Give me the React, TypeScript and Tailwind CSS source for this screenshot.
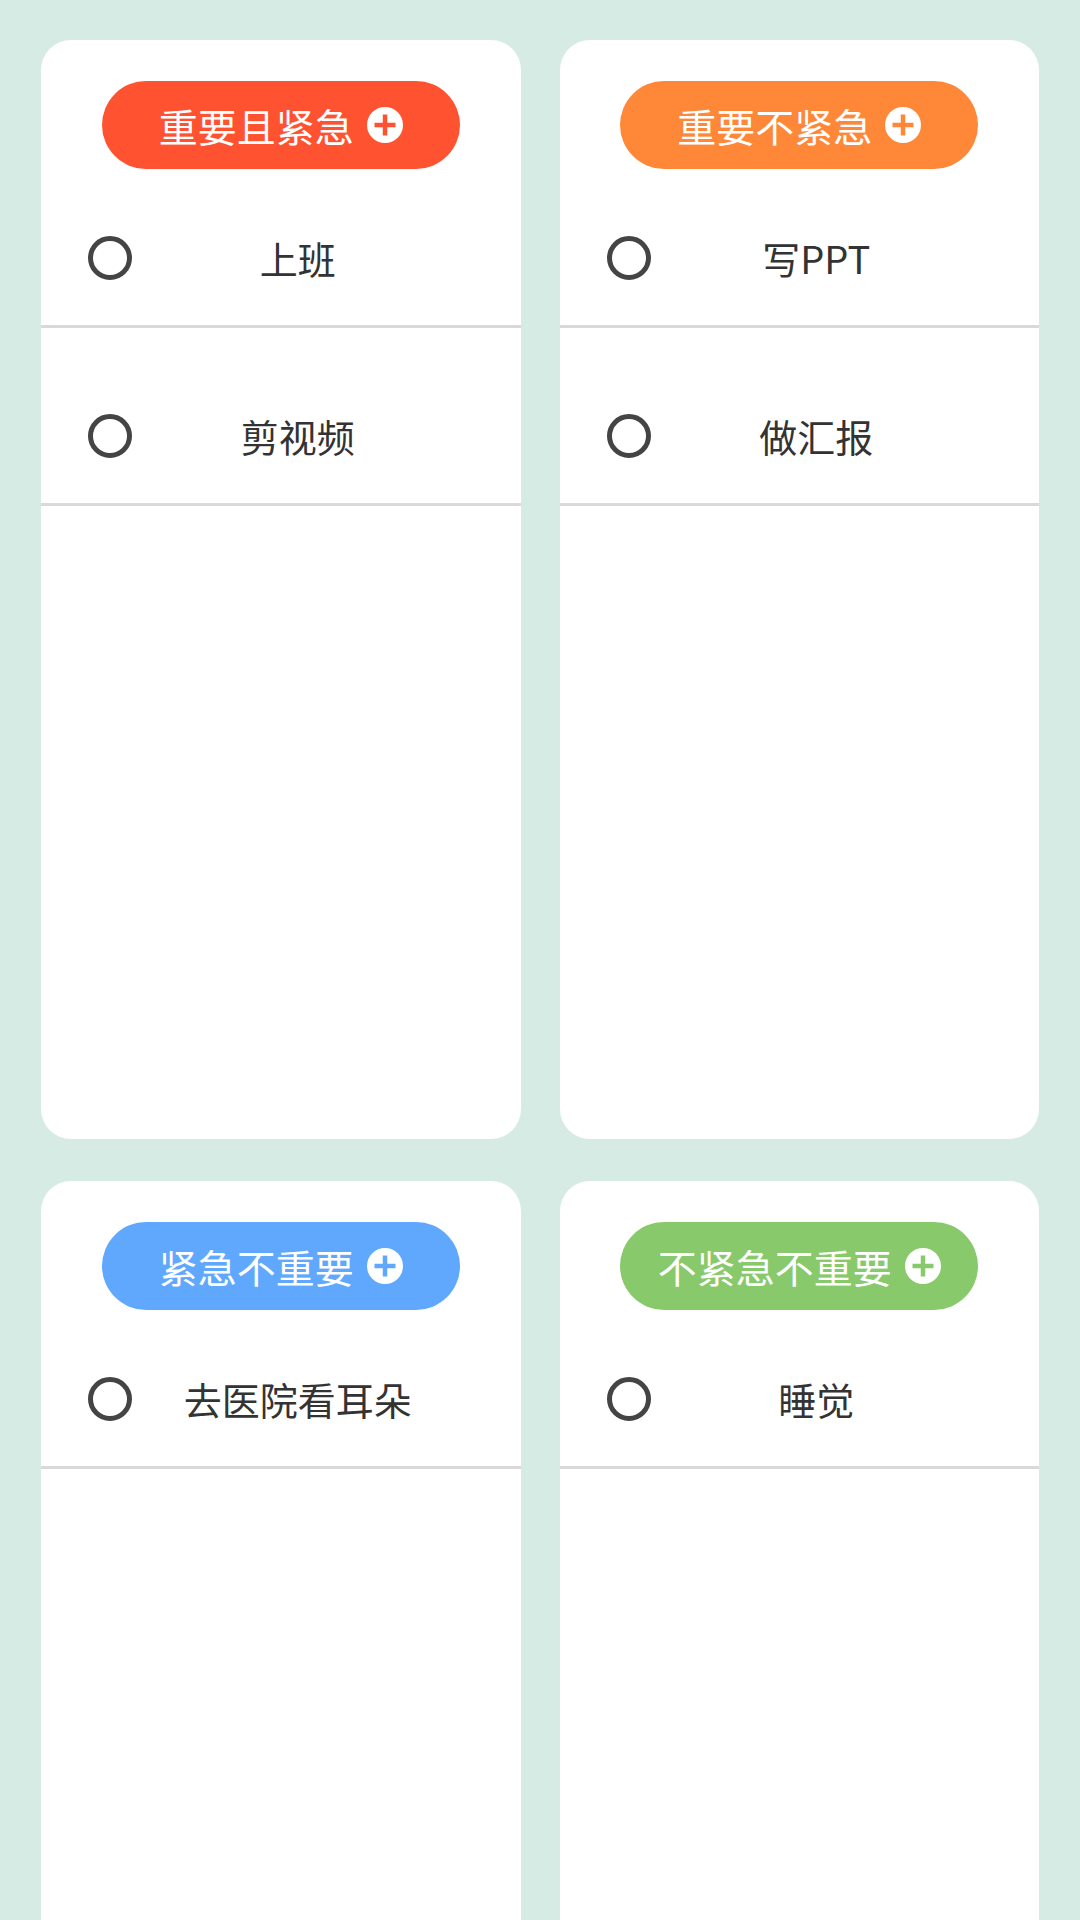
import React from "react";

type Quad = { title: string; color: string; items: string[] };

const quads: Quad[] = [
  { title: "重要且紧急", color: "#ff5230", items: ["上班", "剪视频"] },
  { title: "重要不紧急", color: "#ff8838", items: ["写PPT", "做汇报"] },
  { title: "紧急不重要", color: "#5fa8fe", items: ["去医院看耳朵"] },
  { title: "不紧急不重要", color: "#88c96b", items: ["睡觉"] },
];

const bgClass: Record<string, string> = {
  "#ff5230": "bg-[#ff5230]",
  "#ff8838": "bg-[#ff8838]",
  "#5fa8fe": "bg-[#5fa8fe]",
  "#88c96b": "bg-[#88c96b]",
};

function PlusIcon({ color }: { color: string }) {
  return (
    <svg width="36" height="36" viewBox="0 0 36 36">
      <circle cx="18" cy="18" r="18" fill="#ffffff" />
      <line x1="18" y1="7.5" x2="18" y2="28.5" stroke={color} strokeWidth="4.5" />
      <line x1="7.5" y1="18" x2="28.5" y2="18" stroke={color} strokeWidth="4.5" />
    </svg>
  );
}

function Card({ q }: { q: Quad }) {
  return (
    <div className="h-[1099px] bg-white rounded-[30px] flex flex-col pt-[41px]">
      <div className="flex justify-center mb-[-19px] relative z-10">
        <div
          className={`w-[358px] h-[88px] rounded-full flex items-center justify-center gap-[13px] text-white text-[39px] leading-none ${bgClass[q.color]}`}
        >
          <span>{q.title}</span>
          <PlusIcon color={q.color} />
        </div>
      </div>
      <div className="flex flex-col">
        {q.items.map((it) => (
          <div
            key={it}
            className="h-[178px] pt-[40px] border-b-[3px] border-[#d9d9d9] flex items-center pl-[47px] pr-[57px]"
          >
            <div className="w-[44px] h-[44px] rounded-full border-[5px] border-[#444444] shrink-0" />
            <span className="flex-1 text-center text-[38px] leading-none text-[#333333]">{it}</span>
          </div>
        ))}
      </div>
    </div>
  );
}

export default function App() {
  return (
    <div
      className="w-[1080px] h-[1920px] overflow-hidden bg-[#d5ebe3] pl-[41px] pr-[41px] pt-[40px]"
      style={{ fontFamily: '"Noto Sans CJK SC", "Noto Sans", sans-serif' }}
    >
      <div className="grid grid-cols-2 gap-x-[39px] gap-y-[42px]">
        {quads.map((q) => (
          <Card key={q.title} q={q} />
        ))}
      </div>
    </div>
  );
}
